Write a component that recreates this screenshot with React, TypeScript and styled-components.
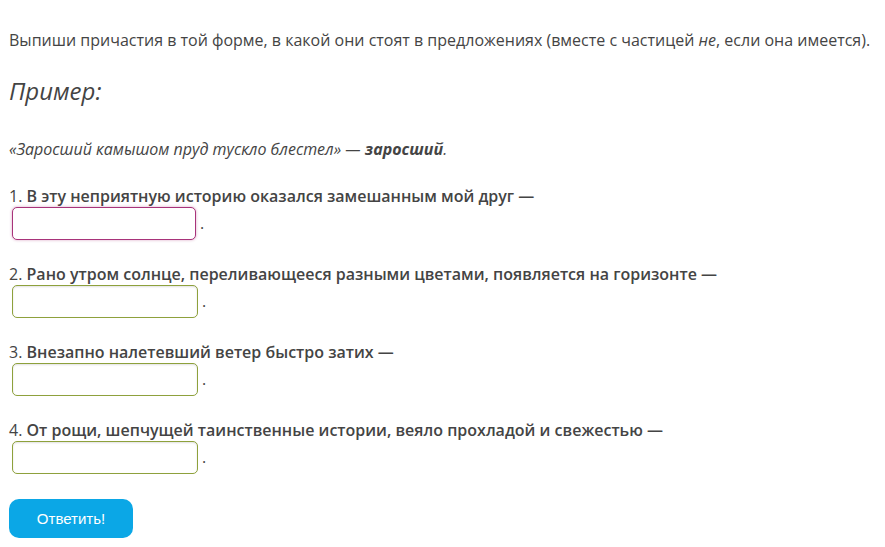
import React from 'react';
import styled, { createGlobalStyle } from 'styled-components';

const GlobalStyle = createGlobalStyle`
  html, body {
    margin: 0;
    padding: 0;
    background: #ffffff;
  }
  body {
    font-family: 'Open Sans', 'Noto Sans', sans-serif;
    color: #444444;
  }
`;

const Page = styled.div`
  padding: 28px 9px 0 9px;
`;

const Instruction = styled.p`
  margin: 0;
  font-size: 16px;
  line-height: 24px;
`;

const ExampleTitle = styled.h2`
  margin: 23px 0 0 0;
  font-size: 24px;
  line-height: 32px;
  font-style: italic;
  font-weight: 400;
`;

const ExampleLine = styled.p`
  margin: 30px 0 0 0;
  font-size: 16px;
  line-height: 24px;
  font-style: italic;
`;

const Questions = styled.ol`
  list-style: none;
  margin: 23px 0 0 0;
  padding: 0;
  display: flex;
  flex-direction: column;
  gap: 22px;
`;

const Question = styled.li`
  font-size: 16px;
  line-height: 24px;
`;

const Sentence = styled.span`
  font-weight: 600;
`;

const AnswerRow = styled.div`
  display: flex;
  align-items: baseline;
  margin-top: -1px;
  padding-left: 3px;
`;

const Field = styled.input<{ $active?: boolean }>`
  box-sizing: border-box;
  width: ${p => (p.$active ? 184 : 186)}px;
  height: 33px;
  border-radius: 5px;
  border: 1px solid ${p => (p.$active ? '#a8337a' : '#8ea13c')};
  box-shadow: ${p =>
    p.$active
      ? '0 0 3px rgba(168, 51, 122, 0.45)'
      : 'inset 0 1px 2px rgba(0, 0, 0, 0.12)'};
  background: #ffffff;
  font-family: 'Open Sans', sans-serif;
  font-size: 16px;
  padding: 0 6px;
  outline: none;
  caret-color: #333;
`;

const Dot = styled.span`
  margin-left: 4px;
  position: relative;
  top: -1px;
`;

const SubmitButton = styled.button`
  margin-top: 25px;
  width: 124px;
  height: 39px;
  border: none;
  border-radius: 10px;
  background: #0ba7e6;
  color: #ffffff;
  font-family: 'Liberation Sans', Arial, sans-serif;
  font-size: 15px;
  cursor: pointer;
`;

const questions = [
  'В эту неприятную историю оказался замешанным мой друг —',
  'Рано утром солнце, переливающееся разными цветами, появляется на горизонте —',
  'Внезапно налетевший ветер быстро затих —',
  'От рощи, шепчущей таинственные истории, веяло прохладой и свежестью —',
];

export default function App() {
  return (
    <>
      <GlobalStyle />
      <Page>
        <Instruction>
          Выпиши причастия в той форме, в какой они стоят в предложениях (вместе с частицей <i>не</i>, если она имеется).
        </Instruction>
        <ExampleTitle>Пример:</ExampleTitle>
        <ExampleLine>
          «Заросший камышом пруд тускло блестел» — <b>заросший</b>.
        </ExampleLine>
        <Questions>
          {questions.map((q, i) => (
            <Question key={i}>
              {i + 1}. <Sentence>{q}</Sentence>
              <AnswerRow>
                <Field $active={i === 0} autoFocus={i === 0} />
                <Dot>.</Dot>
              </AnswerRow>
            </Question>
          ))}
        </Questions>
        <SubmitButton>Ответить!</SubmitButton>
      </Page>
    </>
  );
}
